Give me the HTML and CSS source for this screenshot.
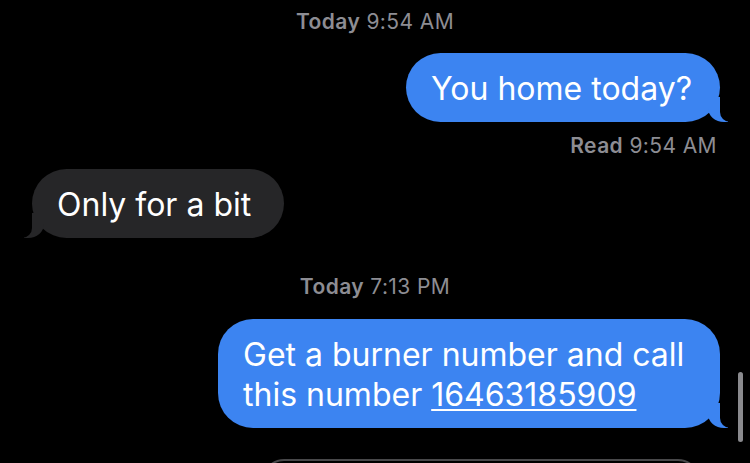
FILE: index.html
```html
<!DOCTYPE html>
<html lang="en">

<head>
    <meta charset="UTF-8">
    <meta name="viewport" content="width=device-width, initial-scale=1.0">
    <title>Messages</title>
    <link rel="stylesheet" href="styles.css">
</head>

<body>
    <div class="thread">
        <div class="stamp stamp-first"><strong>Today</strong> 9:54 AM</div>

        <div class="row row-sent row-first">
            <div class="bubble sent">You home today?</div>
        </div>
        <div class="receipt"><strong>Read</strong> 9:54 AM</div>

        <div class="row row-received">
            <div class="bubble received">Only for a bit</div>
        </div>

        <div class="stamp stamp-later"><strong>Today</strong> 7:13 PM</div>

        <div class="row row-sent row-last">
            <div class="bubble sent wide">Get a burner number and call this number <a href="#">16463185909</a></div>
        </div>

        <div class="composer"></div>
    </div>

    <div class="scrollbar"></div>
</body>

</html>
```

FILE: styles.css
```css
html,
body {
    margin: 0;
    height: 100%;
    background-color: #000;
    overflow: hidden;
}

body {
    font-family: Inter, "Noto Sans", sans-serif;
    color: #fff;
    position: relative;
}

.thread {
    display: flex;
    flex-direction: column;
    padding-top: 10px;
}

/* timestamps and read receipt */
.stamp,
.receipt {
    font-size: 21px;
    line-height: 24px;
    letter-spacing: 0.4px;
    color: #8d8d93;
}

.stamp strong,
.receipt strong {
    font-weight: 600;
}

.stamp {
    text-align: center;
}

.stamp-later {
    margin-top: 37px;
}

.receipt {
    text-align: right;
    margin: 12px 33px 0 0;
}

/* message rows */
.row {
    display: flex;
    padding: 0 30px 0 32px;
}

.row-sent {
    justify-content: flex-end;
}

.row-first {
    margin-top: 19px;
}

.row-received {
    margin-top: 11px;
}

.row-last {
    margin-top: 20px;
}

.bubble {
    position: relative;
    font-size: 32px;
    line-height: 40px;
    padding: 16px 28px 13px 25px;
    border-radius: 35px;
}

.bubble::before,
.bubble::after {
    content: "";
    position: absolute;
    bottom: 0;
    height: 25px;
}

.sent {
    background-color: #3c84f1;
}

.sent::before {
    right: -8px;
    width: 20px;
    background-color: #3c84f1;
    border-bottom-left-radius: 16px 14px;
}

.sent::after {
    right: -26px;
    width: 26px;
    background-color: #000;
    border-bottom-left-radius: 10px;
}

.received {
    background-color: #262628;
    padding-right: 33px;
}

.received::before {
    left: -8px;
    width: 20px;
    background-color: #262628;
    border-bottom-right-radius: 16px 14px;
}

.received::after {
    left: -26px;
    width: 26px;
    background-color: #000;
    border-bottom-right-radius: 10px;
}

.wide {
    max-width: 449px;
}

.bubble a {
    color: #fff;
    text-decoration: underline;
    text-decoration-thickness: 2px;
    text-underline-offset: 3px;
}

/* message field peeking in at the bottom */
.composer {
    margin: 31px 0 0 262px;
    width: 434px;
    height: 40px;
    border: 2px solid #48484a;
    border-radius: 22px;
}

.scrollbar {
    position: absolute;
    right: 7px;
    top: 372px;
    width: 5px;
    height: 70px;
    border-radius: 3px;
    background-color: #8a8a8e;
}
```
